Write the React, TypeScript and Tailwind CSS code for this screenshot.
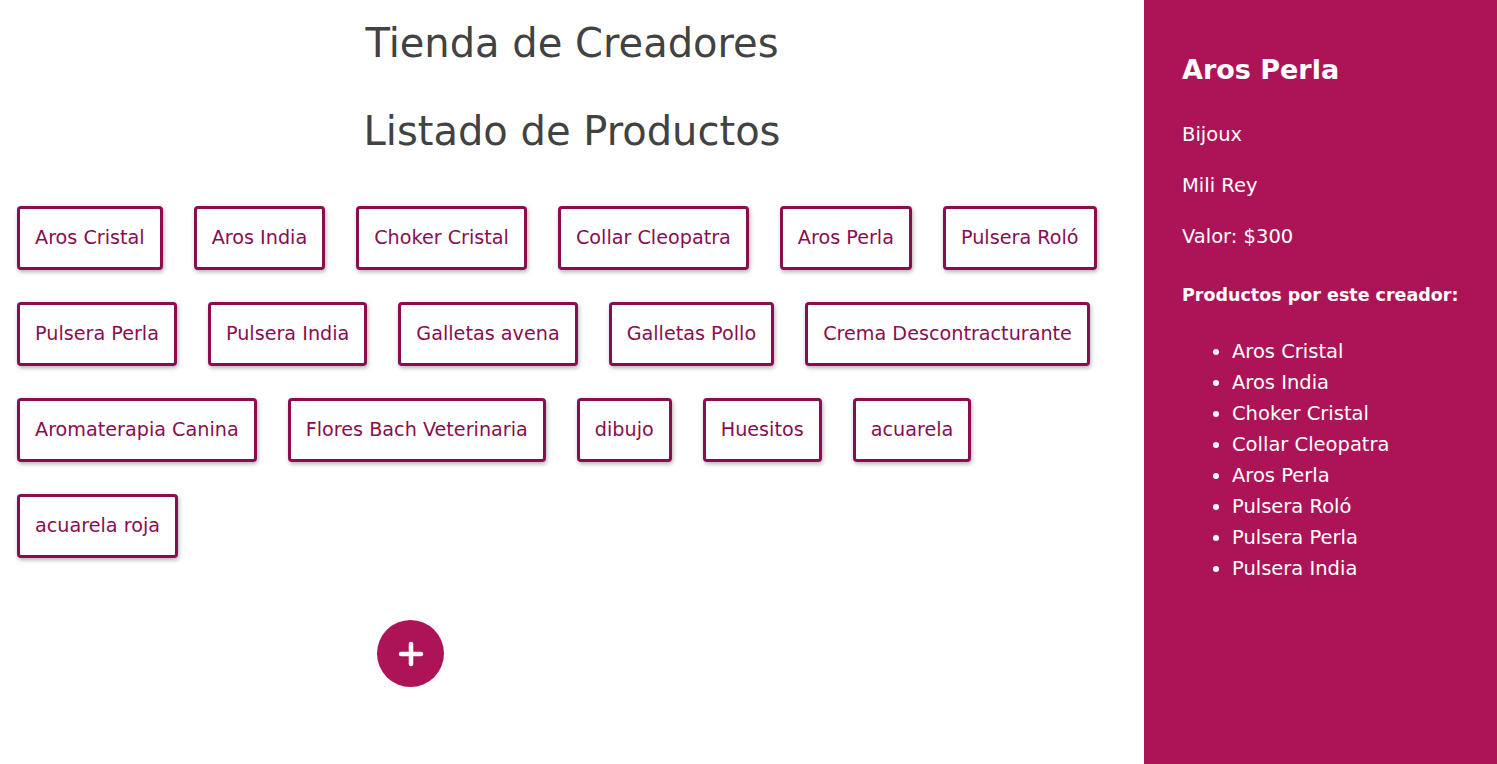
import { Plus } from "lucide-react";

const products = [
  "Aros Cristal",
  "Aros India",
  "Choker Cristal",
  "Collar Cleopatra",
  "Aros Perla",
  "Pulsera Roló",
  "Pulsera Perla",
  "Pulsera India",
  "Galletas avena",
  "Galletas Pollo",
  "Crema Descontracturante",
  "Aromaterapia Canina",
  "Flores Bach Veterinaria",
  "dibujo",
  "Huesitos",
  "acuarela",
  "acuarela roja",
];

const byCreator = products.slice(0, 8);

const App = () => {
  return (
    <div className="flex min-h-screen bg-white font-['DejaVu_Sans',sans-serif]">
      <main className="flex-1 flex flex-col">
        <h1 className="mt-[19px] text-center text-[40px] leading-[48px] text-[#424242]">
          Tienda de Creadores
        </h1>
        <h2 className="mt-[40px] text-center text-[40px] leading-[48px] text-[#424242]">
          Listado de Productos
        </h2>
        <div className="mt-[35px] flex flex-wrap pl-[1.5px]">
          {products.map((p) => (
            <button
              key={p}
              className="mx-[15.5px] my-4 h-16 rounded border-[3px] border-[#880e4f] bg-white px-[15px] text-[19.2px] text-[#880e4f] shadow-[1px_2px_4px_rgba(0,0,0,0.3)]"
            >
              {p}
            </button>
          ))}
        </div>
        <button className="ml-[377px] mt-[46px] flex h-[67px] w-[67px] items-center justify-center rounded-full bg-[#ad1457] text-white">
          <Plus size={34} strokeWidth={3.2} />
        </button>
      </main>
      <aside className="w-[353px] shrink-0 bg-[#ad1457] px-[38px] pt-[52px] text-white">
        <h3 className="text-[27px] font-bold leading-[36px]">Aros Perla</h3>
        <p className="mt-[33px] text-[19.5px] leading-[28px]">Bijoux</p>
        <p className="mt-[23px] text-[19.5px] leading-[28px]">Mili Rey</p>
        <p className="mt-[23px] text-[19.5px] leading-[28px]">Valor: $300</p>
        <p className="mt-[30px] text-[17.5px] font-bold leading-[28px]">
          Productos por este creador:
        </p>
        <ul className="mt-[27px] list-disc pl-[50px] text-[19.5px] leading-[31px]">
          {byCreator.map((p) => (
            <li key={p}>{p}</li>
          ))}
        </ul>
      </aside>
    </div>
  );
};

export default App;
